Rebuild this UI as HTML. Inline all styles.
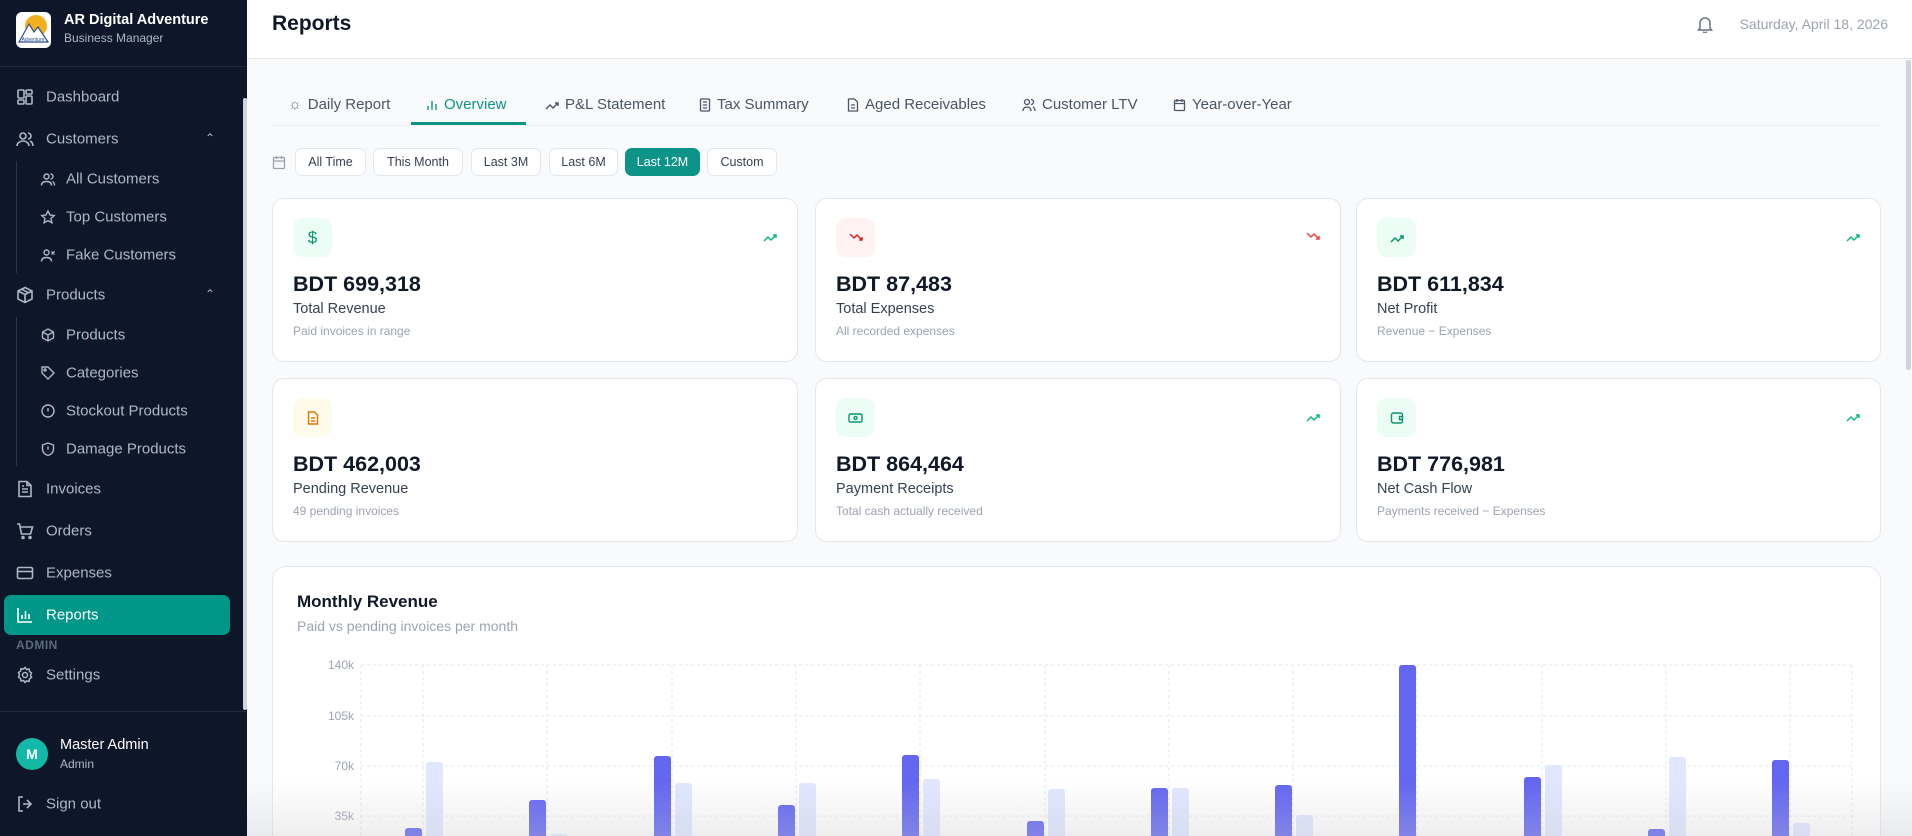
<!DOCTYPE html>
<html style="width:1912px;height:836px;overflow:hidden"><head><meta charset="utf-8"><style>
*{box-sizing:border-box;margin:0;padding:0}
body{width:1912px;height:836px;overflow:hidden;font-family:"Liberation Sans",sans-serif;background:#f8fafc;position:relative}
.sb{position:absolute;left:0;top:0;width:247px;height:836px;background:#0e1729}
.a{position:absolute}
.nav{position:absolute;left:46px;font-size:15px;color:#aeb7c4;transform:translateY(-50%)}
.sub{left:66px}
.ic{position:absolute;transform:translate(-50%,-50%)}
svg{display:block}
.tab{position:absolute;top:96px;font-size:15px;color:#4b5563;display:flex;align-items:center;gap:6px}
.pill{position:absolute;top:148px;height:28px;border:1px solid #e2e8f0;border-radius:7px;background:#fff;font-size:12.5px;color:#374151;display:flex;align-items:center;justify-content:center}
.card{position:absolute;background:#fff;border:1px solid #e5e7eb;border-radius:12px;width:526px;height:164px}
.cib{position:absolute;left:20px;top:19px;width:39px;height:39px;border-radius:10px;display:flex;align-items:center;justify-content:center}
.val{position:absolute;left:20px;top:73px;font-size:21.5px;font-weight:bold;color:#111827}
.lbl{position:absolute;left:20px;top:102px;font-size:14.5px;color:#374151}
.sm{position:absolute;left:20px;top:125px;font-size:12px;color:#9ca3af}
.tr{position:absolute;right:20px;top:32px}
</style></head><body>
<div class="sb">
 <div class="a" style="left:16px;top:12px;width:35px;height:36px;background:#fff;border-radius:6px;overflow:hidden">
  <svg width="35" height="36"><circle cx="20" cy="14" r="11" fill="#f2b01e"/><path d="M3 30 L13 12 L18 20 L22 15 L32 30Z" fill="#fff" stroke="#2a4d8f" stroke-width="1.2"/><text x="17" y="29" font-size="5" fill="#2a4d8f" text-anchor="middle" font-family="Liberation Sans">Adventure</text></svg>
 </div>
 <div class="a" style="left:64px;top:12px;font-size:14.5px;font-weight:bold;color:#fff">AR Digital Adventure</div>
 <div class="a" style="left:64px;top:31px;font-size:12px;color:#aeb7c4">Business Manager</div>
 <div class="a" style="left:0;top:66px;width:247px;height:1px;background:#1f2a3d"></div>
 <div class="a" style="left:243px;top:98px;width:4px;height:612px;background:#d1d5db;border-radius:2px"></div>
 <div class="a" style="left:16px;top:161px;width:1px;height:112px;background:#2b3649"></div>
 <div class="a" style="left:16px;top:317px;width:1px;height:149px;background:#2b3649"></div>

 <svg class="ic" style="left:25px;top:97px" width="18" height="18" fill="none" stroke="#aeb7c4" stroke-width="1.6"><rect x="2" y="2" width="6" height="8" rx="1"/><rect x="10" y="2" width="6" height="4" rx="1"/><rect x="10" y="8" width="6" height="8" rx="1"/><rect x="2" y="12" width="6" height="4" rx="1"/></svg>
 <div class="nav" style="top:97px">Dashboard</div>
 <svg class="ic" style="left:25px;top:139px" width="18" height="18" fill="none" stroke="#aeb7c4" stroke-width="1.6"><circle cx="7" cy="6" r="3"/><path d="M1 16c0-3 3-5 6-5s6 2 6 5M12 3a3 3 0 0 1 0 6M14 11c2 1 3 3 3 5"/></svg>
 <div class="nav" style="top:139px">Customers</div>
 <div class="a" style="left:205px;top:131px;color:#aeb7c4;font-size:12px">&#8963;</div>
 <svg class="ic" style="left:48px;top:179px" width="15" height="15" fill="none" stroke="#aeb7c4" stroke-width="1.4"><circle cx="6" cy="5" r="2.5"/><path d="M1 14c0-3 2-4 5-4s5 1 5 4M10 2.5a2.5 2.5 0 0 1 0 5M12 10c1.5.7 2 2 2 4"/></svg>
 <div class="nav sub" style="top:179px">All Customers</div>
 <svg class="ic" style="left:48px;top:217px" width="15" height="15" fill="none" stroke="#aeb7c4" stroke-width="1.4"><path d="M7.5 1.5l1.9 4 4.3.5-3.2 3 .9 4.3-3.9-2.2-3.9 2.2.9-4.3-3.2-3 4.3-.5z"/></svg>
 <div class="nav sub" style="top:217px">Top Customers</div>
 <svg class="ic" style="left:48px;top:255px" width="15" height="15" fill="none" stroke="#aeb7c4" stroke-width="1.4"><circle cx="6" cy="5" r="2.5"/><path d="M1 14c0-3 2-4 5-4s5 1 5 4M11 4l3 3M14 4l-3 3"/></svg>
 <div class="nav sub" style="top:255px">Fake Customers</div>
 <svg class="ic" style="left:25px;top:295px" width="18" height="18" fill="none" stroke="#aeb7c4" stroke-width="1.6"><path d="M9 1.5l7 3.5v8l-7 3.5-7-3.5v-8zM2 5l7 3.5 7-3.5M9 8.5v8M5.5 3.2l7 3.6"/></svg>
 <div class="nav" style="top:295px">Products</div>
 <div class="a" style="left:205px;top:287px;color:#aeb7c4;font-size:12px">&#8963;</div>
 <svg class="ic" style="left:48px;top:335px" width="15" height="15" fill="none" stroke="#aeb7c4" stroke-width="1.4"><path d="M7.5 1.5l5.5 3v6l-5.5 3-5.5-3v-6zM2 4.5l5.5 3 5.5-3M7.5 7.5v6"/></svg>
 <div class="nav sub" style="top:335px">Products</div>
 <svg class="ic" style="left:48px;top:373px" width="15" height="15" fill="none" stroke="#aeb7c4" stroke-width="1.4"><path d="M1.5 1.5h6l6 6-6 6-6-6z"/><circle cx="4.5" cy="4.5" r="1"/></svg>
 <div class="nav sub" style="top:373px">Categories</div>
 <svg class="ic" style="left:48px;top:411px" width="15" height="15" fill="none" stroke="#aeb7c4" stroke-width="1.4"><circle cx="7.5" cy="7.5" r="6"/><path d="M7.5 4.5v3.5M7.5 10.5v.3"/></svg>
 <div class="nav sub" style="top:411px">Stockout Products</div>
 <svg class="ic" style="left:48px;top:449px" width="15" height="15" fill="none" stroke="#aeb7c4" stroke-width="1.4"><path d="M7.5 1.5l5.5 2v4c0 3.5-2.5 5.5-5.5 6.5-3-1-5.5-3-5.5-6.5v-4zM7.5 5v3M7.5 10v.3"/></svg>
 <div class="nav sub" style="top:449px">Damage Products</div>
 <svg class="ic" style="left:25px;top:489px" width="18" height="18" fill="none" stroke="#aeb7c4" stroke-width="1.6"><path d="M3 1.5h8l4 4v11H3zM11 1.5v4h4M6 9h6M6 12h6M6 6h2"/></svg>
 <div class="nav" style="top:489px">Invoices</div>
 <svg class="ic" style="left:25px;top:531px" width="18" height="18" fill="none" stroke="#aeb7c4" stroke-width="1.6"><path d="M1 2h2.5l2 10h9l2-7H4.5"/><circle cx="7" cy="15.5" r="1"/><circle cx="14" cy="15.5" r="1"/></svg>
 <div class="nav" style="top:531px">Orders</div>
 <svg class="ic" style="left:25px;top:573px" width="18" height="18" fill="none" stroke="#aeb7c4" stroke-width="1.6"><rect x="1.5" y="3.5" width="15" height="11" rx="1.5"/><path d="M1.5 7.5h15"/></svg>
 <div class="nav" style="top:573px">Expenses</div>
 <div class="a" style="left:4px;top:595px;width:226px;height:40px;background:#009688;border-radius:7px"></div>
 <svg class="ic" style="left:25px;top:615px" width="18" height="18" fill="none" stroke="#fff" stroke-width="1.6"><path d="M2 2v14h14M6 13V9M9.5 13V5M13 13V8"/></svg>
 <div class="nav" style="top:615px;color:#fff">Reports</div>
 <div class="a" style="left:16px;top:638px;font-size:12px;font-weight:bold;color:#5d6b80;letter-spacing:.5px">ADMIN</div>
 <svg class="ic" style="left:25px;top:675px" width="18" height="18" fill="none" stroke="#aeb7c4" stroke-width="1.5"><circle cx="9" cy="9" r="2.5"/><path d="M9 1.5l1.5 2 2.5-.5.5 2.5 2 1.5-1 2.2 1 2.2-2 1.5-.5 2.5-2.5-.5L9 16.5l-1.5-2-2.5.5-.5-2.5-2-1.5 1-2.2-1-2.2 2-1.5.5-2.5 2.5.5z"/></svg>
 <div class="nav" style="top:675px">Settings</div>
 <div class="a" style="left:0;top:711px;width:247px;height:1px;background:#1f2a3d"></div>
 <div class="a" style="left:16px;top:738px;width:32px;height:32px;border-radius:50%;background:#14b8a6;color:#fff;font-weight:bold;font-size:14px;display:flex;align-items:center;justify-content:center">M</div>
 <div class="a" style="left:60px;top:737px;font-size:14.5px;color:#fff">Master Admin</div>
 <div class="a" style="left:60px;top:757px;font-size:12px;color:#aeb7c4">Admin</div>
 <svg class="ic" style="left:25px;top:804px" width="18" height="18" fill="none" stroke="#aeb7c4" stroke-width="1.6"><path d="M7 2H3v14h4M11 5l4 4-4 4M15 9H7"/></svg>
 <div class="nav" style="top:804px">Sign out</div>
</div>

<div class="a" style="left:247px;top:0;width:1665px;height:59px;background:#fff;border-bottom:1px solid #e5e7eb"></div>
<div class="a" style="left:272px;top:12px;font-size:21px;font-weight:bold;color:#111827">Reports</div>
<svg class="a" style="left:1696px;top:15px" width="18" height="18" fill="none" stroke="#6b7280" stroke-width="1.5"><path d="M4 13V8a5 5 0 0 1 10 0v5l1.5 2h-13zM7.5 16.5a1.5 1.5 0 0 0 3 0"/></svg>
<div class="a" style="right:24px;top:16px;font-size:14px;color:#9ca3af">Saturday, April 18, 2026</div>

<div class="a" style="left:272px;top:125px;width:1609px;height:1px;background:#eceff3"></div>
<div class="a" style="left:411px;top:122px;width:115px;height:3px;background:#0d9488"></div>
<div class="tab" style="left:288px"><span style="color:#6b7280">☼</span>Daily Report</div>
<div class="tab" style="left:426px;color:#0d9488"><svg width="12" height="12" fill="none" stroke="#0d9488" stroke-width="1.4"><path d="M2 11V7M6 11V2M10 11V5"/></svg>Overview</div>
<div class="tab" style="left:545px"><svg width="14" height="12" fill="none" stroke="#4b5563" stroke-width="1.4"><path d="M1 10l4-4 3 3 5-5M10 4h3v3"/></svg>P&amp;L Statement</div>
<div class="tab" style="left:699px"><svg width="12" height="14" fill="none" stroke="#4b5563" stroke-width="1.3"><rect x="1.5" y="1" width="9" height="12" rx="1"/><path d="M4 4h4M4 7h4M4 10h4"/></svg>Tax Summary</div>
<div class="tab" style="left:847px"><svg width="12" height="14" fill="none" stroke="#4b5563" stroke-width="1.3"><path d="M1.5 1h6l3 3v9h-9zM4 7h4M4 10h4"/></svg>Aged Receivables</div>
<div class="tab" style="left:1022px"><svg width="14" height="14" fill="none" stroke="#4b5563" stroke-width="1.3"><circle cx="5" cy="4" r="2.5"/><path d="M1 13c0-3 2-4 4-4s4 1 4 4M9 1.5a2.5 2.5 0 0 1 0 5M11 9c1.5.7 2 2 2 4"/></svg>Customer LTV</div>
<div class="tab" style="left:1173px"><svg width="13" height="14" fill="none" stroke="#4b5563" stroke-width="1.3"><rect x="1.5" y="2.5" width="10" height="10" rx="1"/><path d="M1.5 5.5h10M4 1v3M9 1v3"/></svg>Year-over-Year</div>

<svg class="a" style="left:272px;top:155px" width="14" height="15" fill="none" stroke="#9ca3af" stroke-width="1.3"><rect x="1.5" y="2.5" width="11" height="11" rx="1"/><path d="M1.5 6h11M4.5 1v3M9.5 1v3"/></svg>
<div class="pill" style="left:295px;width:71px">All Time</div>
<div class="pill" style="left:373px;width:90px">This Month</div>
<div class="pill" style="left:471px;width:70px">Last 3M</div>
<div class="pill" style="left:549px;width:69px">Last 6M</div>
<div class="pill" style="left:625px;width:75px;background:#0d9488;border-color:#0d9488;color:#fff">Last 12M</div>
<div class="pill" style="left:707px;width:70px">Custom</div>

<div class="card" style="left:272px;top:198px"><div class="cib" style="background:#ecfdf5;color:#059669;font-size:17px">$</div><svg class="tr" width="14" height="12" fill="none" stroke="#10b981" stroke-width="1.5"><path d="M1 10l4-4 3 3 5-5M10 4h3v3"/></svg><div class="val">BDT 699,318</div><div class="lbl">Total Revenue</div><div class="sm">Paid invoices in range</div></div>
<div class="card" style="left:815px;top:198px"><div class="cib" style="background:#fef2f2"><svg width="14" height="12" fill="none" stroke="#dc2626" stroke-width="1.5"><path d="M1 2l4 4 3-3 5 5M10 8h3V5"/></svg></div><svg class="tr" width="14" height="12" fill="none" stroke="#ef4444" stroke-width="1.5"><path d="M1 2l4 4 3-3 5 5M10 8h3V5"/></svg><div class="val">BDT 87,483</div><div class="lbl">Total Expenses</div><div class="sm">All recorded expenses</div></div>
<div class="card" style="left:1356px;top:198px;width:525px"><div class="cib" style="background:#ecfdf5"><svg width="14" height="12" fill="none" stroke="#059669" stroke-width="1.5"><path d="M1 10l4-4 3 3 5-5M10 4h3v3"/></svg></div><svg class="tr" width="14" height="12" fill="none" stroke="#10b981" stroke-width="1.5"><path d="M1 10l4-4 3 3 5-5M10 4h3v3"/></svg><div class="val">BDT 611,834</div><div class="lbl">Net Profit</div><div class="sm">Revenue − Expenses</div></div>
<div class="card" style="left:272px;top:378px"><div class="cib" style="background:#fffbeb"><svg width="12" height="14" fill="none" stroke="#d97706" stroke-width="1.4"><path d="M1.5 1h6l3 3v9h-9zM4 7h4M4 10h4"/></svg></div><div class="val">BDT 462,003</div><div class="lbl">Pending Revenue</div><div class="sm">49 pending invoices</div></div>
<div class="card" style="left:815px;top:378px"><div class="cib" style="background:#ecfdf5"><svg width="15" height="12" fill="none" stroke="#059669" stroke-width="1.4"><rect x="1" y="2" width="13" height="8" rx="1.5"/><circle cx="7.5" cy="6" r="1.5"/></svg></div><svg class="tr" width="14" height="12" fill="none" stroke="#10b981" stroke-width="1.5"><path d="M1 10l4-4 3 3 5-5M10 4h3v3"/></svg><div class="val">BDT 864,464</div><div class="lbl">Payment Receipts</div><div class="sm">Total cash actually received</div></div>
<div class="card" style="left:1356px;top:378px;width:525px"><div class="cib" style="background:#ecfdf5"><svg width="14" height="14" fill="none" stroke="#059669" stroke-width="1.4"><rect x="1.5" y="2" width="11" height="10" rx="2"/><path d="M12.5 5.5h-3v3h3"/></svg></div><svg class="tr" width="14" height="12" fill="none" stroke="#10b981" stroke-width="1.5"><path d="M1 10l4-4 3 3 5-5M10 4h3v3"/></svg><div class="val">BDT 776,981</div><div class="lbl">Net Cash Flow</div><div class="sm">Payments received − Expenses</div></div>

<div class="a" style="left:272px;top:566px;width:1609px;height:270px;background:#fff;border:1px solid #e5e7eb;border-bottom:none;border-radius:14px 14px 0 0"></div>
<div class="a" style="left:297px;top:592px;font-size:17px;font-weight:bold;color:#111827">Monthly Revenue</div>
<div class="a" style="left:297px;top:618px;font-size:14px;color:#9ca3af">Paid vs pending invoices per month</div>
<svg class="a" style="left:272px;top:640px" width="1609" height="196" font-family="Liberation Sans" font-size="12" fill="#9ca3af">
 <g transform="translate(-272,-640)">
 <g stroke="#e5e7eb" stroke-dasharray="3 3" stroke-width="1">
  <path d="M361 665H1852M361 716H1852M361 766H1852M361 816H1852"/>
  <path d="M361 665V836M1852 665V836M423 665V836M547 665V836M672 665V836M796 665V836M920 665V836M1045 665V836M1169 665V836M1293 665V836M1417 665V836M1542 665V836M1666 665V836M1790 665V836"/>
 </g>
 <g text-anchor="end"><text x="354" y="669">140k</text><text x="354" y="720">105k</text><text x="354" y="770">70k</text><text x="354" y="820">35k</text></g>
 <g fill="#6366f1">
  <rect x="405" y="828" width="17" height="60" rx="3"/>
  <rect x="529" y="800" width="17" height="80" rx="3"/>
  <rect x="654" y="756" width="17" height="120" rx="3"/>
  <rect x="778" y="805" width="17" height="80" rx="3"/>
  <rect x="902" y="755" width="17" height="120" rx="3"/>
  <rect x="1027" y="821" width="17" height="60" rx="3"/>
  <rect x="1151" y="788" width="17" height="80" rx="3"/>
  <rect x="1275" y="785" width="17" height="80" rx="3"/>
  <rect x="1399" y="665" width="17" height="200" rx="3"/>
  <rect x="1524" y="777" width="17" height="80" rx="3"/>
  <rect x="1648" y="829" width="17" height="60" rx="3"/>
  <rect x="1772" y="760" width="17" height="100" rx="3"/>
 </g>
 <g fill="#e0e7ff">
  <rect x="426" y="762" width="17" height="100" rx="3"/>
  <rect x="550" y="834" width="17" height="40" rx="3"/>
  <rect x="675" y="783" width="17" height="80" rx="3"/>
  <rect x="799" y="783" width="17" height="80" rx="3"/>
  <rect x="923" y="779" width="17" height="80" rx="3"/>
  <rect x="1048" y="789" width="17" height="80" rx="3"/>
  <rect x="1172" y="788" width="17" height="80" rx="3"/>
  <rect x="1296" y="815" width="17" height="60" rx="3"/>
  <rect x="1545" y="765" width="17" height="100" rx="3"/>
  <rect x="1669" y="757" width="17" height="100" rx="3"/>
  <rect x="1793" y="823" width="17" height="60" rx="3"/>
 </g>
 </g>
</svg>
<div class="a" style="left:247px;top:780px;width:1665px;height:56px;background:linear-gradient(to bottom,rgba(200,200,205,0),rgba(200,200,205,.3))"></div>
<div class="a" style="left:1906px;top:60px;width:5px;height:310px;background:#d1d5db;border-radius:2px"></div>
</body></html>
